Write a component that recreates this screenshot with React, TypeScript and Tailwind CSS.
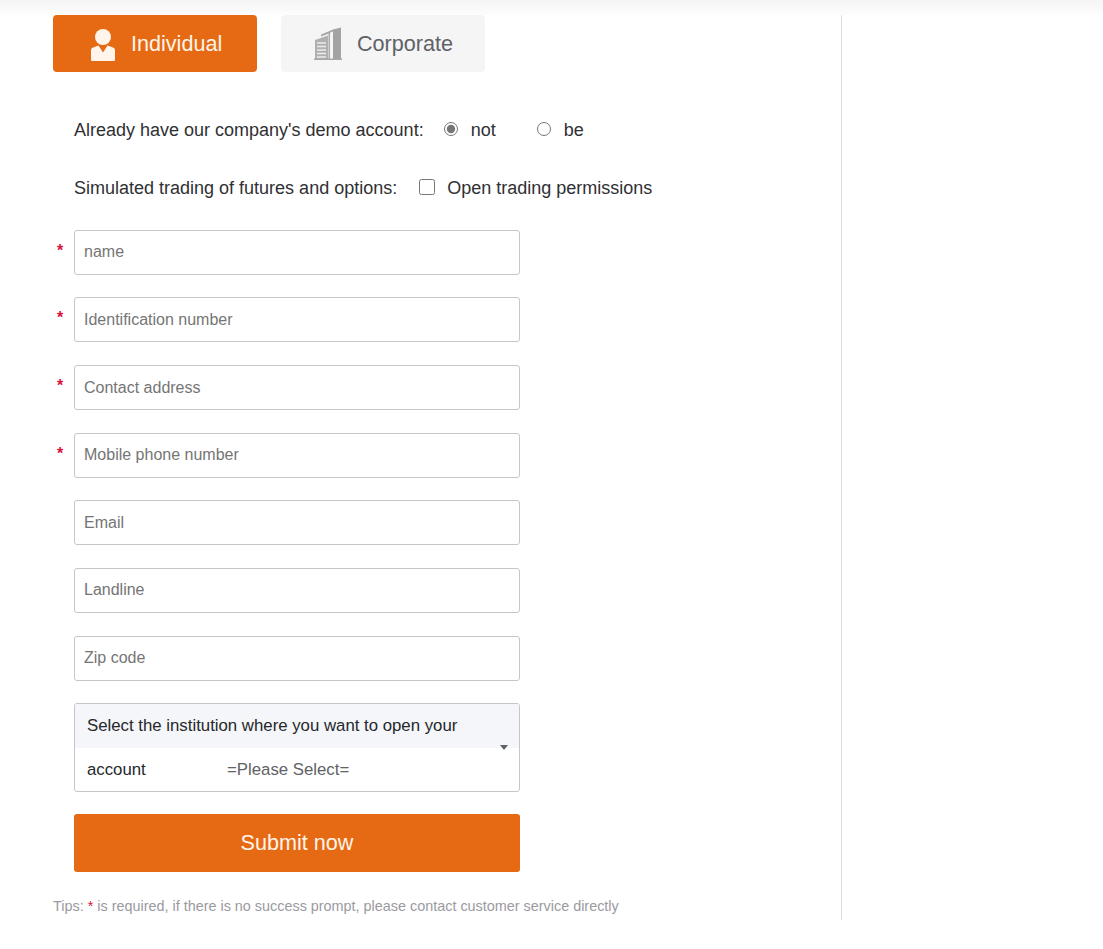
import React from "react";

const font = { fontFamily: '"Liberation Sans", Arial, sans-serif' };

function PersonIcon() {
  return (
    <svg width="26" height="34" viewBox="0 0 26 34" className="mt-[2px] shrink-0">
      <circle cx="13" cy="9" r="8" fill="#fff5ea" />
      <path d="M1 22 Q1 20 3 19.5 L8.5 17.5 L13 24.5 L17.5 17.5 L23 19.5 Q25 20 25 22 V32 a1 1 0 0 1 -1 1 H2 a1 1 0 0 1 -1 -1 Z" fill="#fff5ea" />
    </svg>
  );
}

function BuildingIcon() {
  return (
    <svg width="29" height="33" viewBox="0 0 29 33" className="shrink-0">
      <path d="M1 13 L14 8.5 V32 H1 Z" fill="#b0b0b0" />
      <path d="M3 16 H12 M3 19.5 H12 M3 23 H12 M3 26.5 H12 M3 30 H12" stroke="#ececec" strokeWidth="1.5" />
      <path d="M7 7.5 L19 2.5 V4.5 L16 5.8 V32 H14.5 V6.8 L7 9.5 Z" fill="#a8a8a8" />
      <path d="M19 2.5 L27 0.5 V32 H19 Z" fill="#a3a3a3" />
      <rect x="0" y="31.5" width="28" height="1.5" fill="#a8a8a8" />
    </svg>
  );
}

function Field({ placeholder, required }: { placeholder: string; required?: boolean }) {
  return (
    <div className="relative h-[45px] w-[446px] shrink-0">
      {required && (
        <span className="absolute left-[-17px] top-[11px] text-[16px] font-bold leading-[20px] text-[#d9143c]">*</span>
      )}
      <input
        placeholder={placeholder}
        className="h-full w-full rounded-[3px] border border-[#c4c6cb] bg-white px-[9px] text-[16px] text-[#333] outline-none placeholder:text-[#757575]"
      />
    </div>
  );
}

export default function App() {
  return (
    <div className="min-h-[949px] bg-white" style={font}>
      <div className="h-[15px] bg-gradient-to-b from-[#f5f5f5] to-[#fdfdfd]" />
      <div className="h-[905px] w-[842px] border-r border-[#dcdcdc] pl-[53px]">
        <div className="flex gap-[24px]">
          <button className="flex h-[57px] w-[204px] items-center rounded-[4px] bg-[#e66a14] pl-[37px] text-[21.6px] text-[#fff5ea]">
            <PersonIcon />
            <span className="ml-[15px] pt-[2px]">Individual</span>
          </button>
          <button className="flex h-[57px] w-[204px] items-center rounded-[4px] bg-[#f5f5f6] pl-[33px] text-[21.6px] text-[#606266]">
            <BuildingIcon />
            <span className="ml-[14px] pt-[2px]">Corporate</span>
          </button>
        </div>

        <div className="ml-[21px]">
          <div className="mt-[44px] flex h-[28px] items-center text-[18px] text-[#2f3033]">
            <span>Already have our company's demo account:</span>
            <input type="radio" name="demo" defaultChecked className="mb-[3px] ml-[20px] h-[14px] w-[14px] accent-[#757575]" />
            <span className="ml-[13px]">not</span>
            <input type="radio" name="demo" className="mb-[3px] ml-[41px] h-[14px] w-[14px]" />
            <span className="ml-[13px]">be</span>
          </div>
          <div className="mt-[30px] flex h-[28px] items-center text-[18px] text-[#2f3033]">
            <span>Simulated trading of futures and options:</span>
            <input type="checkbox" className="mb-[3px] ml-[22px] h-[16px] w-[16px]" />
            <span className="ml-[12px]">Open trading permissions</span>
          </div>

          <div className="mt-[27.87px] flex flex-col gap-[22.62px]">
            <Field placeholder="name" required />
            <Field placeholder="Identification number" required />
            <Field placeholder="Contact address" required />
            <Field placeholder="Mobile phone number" required />
            <Field placeholder="Email" />
            <Field placeholder="Landline" />
            <Field placeholder="Zip code" />

            <div className="relative h-[89px] w-[446px] overflow-hidden rounded-[3px] border border-[#c4c6cb] text-[16.8px] text-[#26282b]">
              <div className="flex h-[44px] items-center bg-[#f4f6f9] pb-[1px] pl-[12px]">
                Select the institution where you want to open your
              </div>
              <div className="flex h-[43px] items-center pl-[12px]">
                <span className="w-[140px]">account</span>
                <span className="text-[#606266]">=Please Select=</span>
              </div>
              <span className="absolute right-[11px] top-[41px] h-0 w-0 border-x-[4px] border-t-[5px] border-x-transparent border-t-[#606266]" />
            </div>
          </div>

          <button className="mt-[22px] block h-[58px] w-[446px] rounded-[3px] bg-[#e66a14] text-center text-[21.6px] text-[#fff5ea]">
            Submit now
          </button>
        </div>

        <p className="mt-[25px] text-[14.4px] leading-[18px] text-[#9a9a9f]">
          Tips: <span className="text-[#d9143c]">*</span> is required, if there is no success prompt, please contact customer service directly
        </p>
      </div>
    </div>
  );
}
